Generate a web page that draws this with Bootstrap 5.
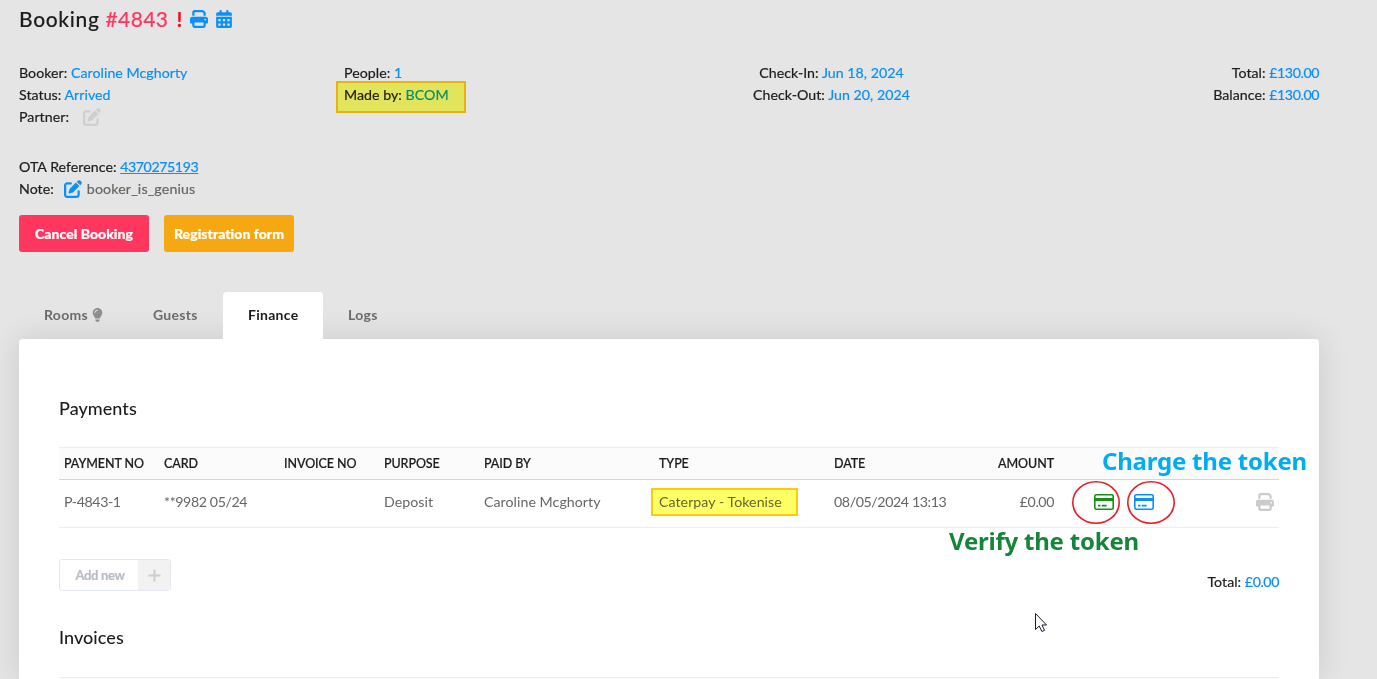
<!DOCTYPE html>
<html lang="en">
  <head>
    <meta charset="UTF-8" />
    <meta name="viewport" content="width=device-width, initial-scale=1.0" />
    <title>Booking #4843</title>
    <link
      rel="stylesheet"
      href="https://cdn.jsdelivr.net/npm/bootstrap@5.3.0/dist/css/bootstrap.min.css"
    />
    <style>
      body {
        background-color: #e5e5e5;
        font-family: Lato, "Liberation Sans", sans-serif;
        font-size: 14.2px;
        line-height: 22px;
        letter-spacing: 0.03px;
        -webkit-text-stroke: 0.2px currentColor;
        color: #1c1c1c;
        height: 679px;
        overflow: hidden;
      }

      svg {
        fill: currentColor;
        display: block;
      }

      .page {
        padding: 4px 58px 0 19px;
      }

      .blue {
        color: #0a8ffb;
      }

      .digits {
        letter-spacing: -0.42px;
      }

      .booking-title {
        font-size: 21px;
        line-height: 30px;
        font-weight: 500;
        letter-spacing: 0.65px;
        -webkit-text-stroke-width: 0.1px;
        margin: 0 0 28px;
      }

      .booking-no {
        color: #ff365d;
        letter-spacing: 0.4px;
      }

      .alert-sign {
        color: #fa0a1e;
        font-weight: 700;
        margin: 0 7px 0 8px;
      }

      .made-by {
        position: relative;
      }

      .marker-box {
        position: absolute;
        background-color: #ffff66;
        border: 2px solid #ffc90e;
        mix-blend-mode: multiply;
      }

      .marker-made {
        left: -8px;
        top: -3px;
        width: 130px;
        height: 32px;
        background-color: #fcff66;
      }

      .marker-type {
        left: -3px;
        top: 8px;
        width: 147px;
        height: 28px;
      }

      .btn-action {
        width: 130px;
        height: 37px;
        border: 0;
        border-radius: 3px;
        color: #fff;
        font-size: 14px;
        font-weight: 900;
        letter-spacing: 0.05px;
        padding: 0 0 1px;
      }

      .btn-cancel {
        background-color: #ff365d;
      }

      .btn-form {
        background-color: #f6a813;
      }

      .booking-tabs {
        margin-top: 40px;
        border: 0;
        position: relative;
        z-index: 1;
      }

      .booking-tabs .nav-link {
        height: 47px;
        margin-bottom: 0;
        padding: 12px 25px;
        border: 0;
        border-radius: 4px 4px 0 0;
        color: #6b6b6b;
        font-size: 14px;
        font-weight: 700;
        letter-spacing: 0.28px;
        -webkit-text-stroke-width: 0;
        white-space: nowrap;
      }

      .booking-tabs .nav-link.active {
        color: #1c1c1c;
        background-color: #fff;
      }

      .tab-rooms {
        width: 109px;
      }

      .tab-guests {
        width: 95px;
      }

      .tab-finance {
        width: 100px;
      }

      .panel {
        background-color: #fff;
        border-radius: 4px 4px 0 0;
        box-shadow: 0 0 32px rgba(0, 0, 0, 0.12);
        padding: 54px 40px 0;
        height: 340px;
        overflow: hidden;
      }

      .panel h2 {
        font-size: 18px;
        line-height: 30px;
        font-weight: 500;
        letter-spacing: 0.05px;
        -webkit-text-stroke-width: 0;
        margin: 0;
      }

      .grid-table {
        table-layout: fixed;
        width: 1220px;
        margin: 24px 0 0;
        font-size: 14.2px;
        letter-spacing: 0.04px;
        -webkit-text-stroke-width: 0;
        color: #666;
      }

      .grid-table .digits {
        letter-spacing: -0.4px;
      }

      .grid-table th {
        height: 32px;
        padding: 0 5px;
        background-color: #fbfbfb;
        border-top: 1px solid #eeeeef;
        border-bottom: 1px solid #d6d6dc;
        color: #1c1c1c;
        font-size: 12.5px;
        line-height: 20px;
        font-weight: 500;
        letter-spacing: -0.08px;
        -webkit-text-stroke-width: 0.2px;
        vertical-align: middle;
        white-space: nowrap;
      }

      .grid-table td {
        height: 48px;
        padding: 0 5px;
        border-bottom: 1px solid #eeeeef;
        vertical-align: middle;
        white-space: nowrap;
        position: relative;
      }

      .grid-table td .cell-text {
        position: relative;
        top: -2px;
      }

      .row-actions {
        padding: 0 0 3px 30px;
      }

      .add-new {
        width: 112px;
        height: 32px;
        border: 1px solid #e4e7f3;
        border-radius: 3px;
        color: #b8bcc7;
        font-size: 13px;
        font-weight: 700;
        letter-spacing: -0.35px;
        overflow: hidden;
      }

      .add-label {
        padding-left: 2px;
      }

      .add-plus {
        width: 32px;
        background-color: #f2f2f2;
        color: #cdcdcd;
      }

      .invoice-head {
        margin-top: 25px;
        height: 30px;
        background-color: #fbfbfb;
        border-top: 1px solid #ebecf3;
      }

      /* notes drawn over the page */
      .note-text {
        position: absolute;
        z-index: 3;
        font-family: "Noto Sans", "Open Sans", sans-serif;
        font-size: 24px;
        line-height: 32px;
        font-weight: 700;
        letter-spacing: -0.22px;
        -webkit-text-stroke-width: 0;
        white-space: nowrap;
      }

      .note-charge {
        left: 1102px;
        top: 445px;
        color: #00adef;
      }

      .note-verify {
        left: 949px;
        top: 525px;
        color: #16853a;
      }

      .note-rings {
        position: absolute;
        left: 1070px;
        top: 479px;
        z-index: 3;
      }

      .pointer {
        position: absolute;
        left: 1035px;
        top: 613px;
      }
    </style>
  </head>
  <body>
    <!-- Shared icons -->
    <svg class="d-none">
      <symbol id="i-print" viewBox="0 0 512 512">
        <path d="M128 0C92.7 0 64 28.7 64 64v96h64V64H354.7L384 93.3V160h64V93.3c0-17-6.7-33.3-18.7-45.3L400 18.7C388 6.7 371.7 0 354.7 0H128zM384 352v96H128V352H384zm64 32h32c17.7 0 32-14.3 32-32V256c0-35.3-28.7-64-64-64H64c-35.3 0-64 28.7-64 64v96c0 17.7 14.3 32 32 32H64v64c0 35.3 28.7 64 64 64H384c35.3 0 64-28.7 64-64V384zM432 248a24 24 0 1 1 0 48 24 24 0 1 1 0-48z" />
      </symbol>
      <symbol id="i-calendar" viewBox="0 0 448 512">
        <path fill-rule="evenodd" d="M128 0c17.7 0 32 14.3 32 32V64H288V32c0-17.7 14.3-32 32-32s32 14.3 32 32V64h48c26.5 0 48 21.5 48 48v48H0V112C0 85.5 21.5 64 48 64H96V32c0-17.7 14.3-32 32-32zM0 192H448V464c0 26.5-21.5 48-48 48H48c-26.5 0-48-21.5-48-48V192zM64 256v64h64v-64zM192 256v64h64v-64zM320 256v64h64v-64zM64 384v64h64v-64zM192 384v64h64v-64zM320 384v64h64v-64z" />
      </symbol>
      <symbol id="i-edit" viewBox="0 0 512 512">
        <path d="M471.6 21.7c-21.9-21.9-57.3-21.9-79.2 0L362.3 51.7l97.9 97.9 30.1-30.1c21.9-21.9 21.9-57.3 0-79.2L471.6 21.7zm-299.2 220c-6.1 6.1-10.8 13.6-13.5 21.9l-29.6 88.8c-2.9 8.6-.6 18.1 5.8 24.6s15.9 8.7 24.6 5.8l88.8-29.6c8.2-2.7 15.7-7.4 21.9-13.5L437.7 172.3 339.7 74.3 172.4 241.7zM96 64C43 64 0 107 0 160V416c0 53 43 96 96 96H352c53 0 96-43 96-96V320c0-17.7-14.3-32-32-32s-32 14.3-32 32v96c0 17.7-14.3 32-32 32H96c-17.7 0-32-14.3-32-32V160c0-17.7 14.3-32 32-32h96c17.7 0 32-14.3 32-32s-14.3-32-32-32H96z" />
      </symbol>
      <symbol id="i-bulb" viewBox="0 0 384 512">
        <path fill-rule="evenodd" d="M272 384c9.600-31.900 29.500-59.100 49.200-86.200C346 263 368 224 368 176 368 78.800 289.200 0 192 0S16 78.800 16 176c0 48 22 87 46.800 121.800C82.500 324.900 102.400 352.100 112 384H272zM192 512c44.200 0 80-35.800 80-80V416H112v16c0 44.200 35.800 80 80 80zM112 176c0 8.800-7.200 16-16 16s-16-7.200-16-16c0-61.900 50.100-112 112-112 8.800 0 16 7.200 16 16s-7.200 16-16 16c-44.200 0-80 35.800-80 80z" />
      </symbol>
      <symbol id="i-card" viewBox="0 0 20 16">
        <rect x="0.8" y="0.8" width="18.400" height="14.400" rx="1.400" fill="none" stroke="currentColor" stroke-width="1.600" />
        <path d="M1 4h18v3H1zM4 10.800h2.500v1.700H4zM7.700 10.800h5v1.700h-5z" />
      </symbol>
    </svg>

    <div class="page">
      <h1 class="booking-title d-flex align-items-center">
        <span>Booking <span class="booking-no">#4843</span></span>
        <span class="alert-sign">!</span>
        <svg class="blue" width="18" height="18"><use href="#i-print" /></svg>
        <svg class="blue ms-2" width="16" height="18"><use href="#i-calendar" /></svg>
      </h1>

      <!-- Booking summary -->
      <div class="row g-0">
        <div class="col-3">
          <div>Booker: <span class="blue">Caroline Mcghorty</span></div>
          <div>Status: <span class="blue">Arrived</span></div>
          <div class="d-flex align-items-center">
            Partner:
            <svg width="18" height="18" color="#cfcfcf" style="margin-left: 14px"><use href="#i-edit" /></svg>
          </div>
        </div>
        <div class="col-3">
          <div>People: <span class="blue">1</span></div>
          <div class="made-by">
            Made by: <span class="blue">BCOM</span>
            <span class="marker-box marker-made"></span>
          </div>
        </div>
        <div class="col-3 text-center">
          <div>Check-In: <span class="blue">Jun 18, 2024</span></div>
          <div>Check-Out: <span class="blue">Jun 20, 2024</span></div>
        </div>
        <div class="col-3 text-end">
          <div>Total: <span class="blue digits">£130.00</span></div>
          <div>Balance: <span class="blue digits">£130.00</span></div>
        </div>
      </div>

      <div style="margin-top: 28px">
        OTA Reference: <a href="#" class="blue digits">4370275193</a>
      </div>
      <div class="d-flex align-items-center">
        Note:
        <svg class="blue" width="18" height="18" style="margin: 0 5px 0 10px"><use href="#i-edit" /></svg>
        <span style="color: #666; letter-spacing: 0.15px">booker_is_genius</span>
      </div>

      <div class="d-flex" style="gap: 15px; margin-top: 15px">
        <button class="btn btn-action btn-cancel">Cancel Booking</button>
        <button class="btn btn-action btn-form">Registration form</button>
      </div>

      <ul class="nav nav-tabs booking-tabs">
        <li class="nav-item tab-rooms">
          <a class="nav-link d-flex align-items-start" href="#">Rooms
            <svg width="11" height="14" color="#8e8e8e" style="margin: 4px 0 0 4px"><use href="#i-bulb" /></svg>
          </a>
        </li>
        <li class="nav-item tab-guests"><a class="nav-link" href="#">Guests</a></li>
        <li class="nav-item tab-finance"><a class="nav-link active" href="#">Finance</a></li>
        <li class="nav-item"><a class="nav-link" href="#">Logs</a></li>
      </ul>

      <div class="panel">
        <h2>Payments</h2>
        <table class="grid-table">
          <colgroup>
            <col width="100" />
            <col width="120" />
            <col width="100" />
            <col width="100" />
            <col width="175" />
            <col width="175" />
            <col width="150" />
            <col width="80" />
            <col width="220" />
          </colgroup>
          <thead>
            <tr>
              <th>PAYMENT NO</th>
              <th>CARD</th>
              <th>INVOICE NO</th>
              <th>PURPOSE</th>
              <th>PAID BY</th>
              <th>TYPE</th>
              <th>DATE</th>
              <th class="text-end">AMOUNT</th>
              <th></th>
            </tr>
          </thead>
          <tbody>
            <tr>
              <td><span class="cell-text digits">P-4843-1</span></td>
              <td><span class="cell-text digits">**9982 05/24</span></td>
              <td></td>
              <td><span class="cell-text">Deposit</span></td>
              <td><span class="cell-text">Caroline Mcghorty</span></td>
              <td>
                <span class="cell-text">Caterpay - Tokenise</span>
                <span class="marker-box marker-type"></span>
              </td>
              <td><span class="cell-text digits">08/05/2024 13:13</span></td>
              <td class="text-end"><span class="cell-text digits">£0.00</span></td>
              <td>
                <div class="row-actions d-flex align-items-center">
                  <svg width="20" height="16" color="#159015"><use href="#i-card" /></svg>
                  <svg class="blue" width="20" height="16" style="margin-left: 20px"><use href="#i-card" /></svg>
                  <svg class="ms-auto" width="18" height="18" color="#cbcbcb"><use href="#i-print" /></svg>
                </div>
              </td>
            </tr>
          </tbody>
        </table>

        <div class="d-flex justify-content-between" style="margin-top: 31px">
          <div class="add-new d-flex">
            <span class="add-label flex-fill d-flex align-items-center justify-content-center">Add new</span>
            <span class="add-plus d-flex align-items-center justify-content-center">
              <svg width="13" height="13" viewBox="0 0 13 13"><path d="M5.500 0.500h2v5h5v2h-5v5h-2v-5h-5v-2h5z" /></svg>
            </span>
          </div>
          <div style="margin-top: 12px">Total: <span class="blue digits">£0.00</span></div>
        </div>

        <h2 style="margin-top: 29px">Invoices</h2>
        <div class="invoice-head"></div>
      </div>
    </div>

    <div class="note-text note-charge">Charge the token</div>
    <div class="note-text note-verify">Verify the token</div>
    <svg class="note-rings" width="108" height="48" fill="none" stroke="#ed1c24" stroke-width="1.600">
      <ellipse cx="26" cy="23.500" rx="23.200" ry="20.700" fill="none" />
      <ellipse cx="81" cy="23.500" rx="23.200" ry="20.700" fill="none" />
    </svg>
    <svg class="pointer" width="13" height="20" viewBox="0 0 13 20">
      <path d="M.5.500V16.500L4.200 13l2.700 5.500 2.600-1.200L7 12h4.500z" fill="#fff" stroke="#1a1a2a" />
    </svg>

    <script src="https://cdn.jsdelivr.net/npm/bootstrap@5.3.0/dist/js/bootstrap.bundle.min.js"></script>
  </body>
</html>
